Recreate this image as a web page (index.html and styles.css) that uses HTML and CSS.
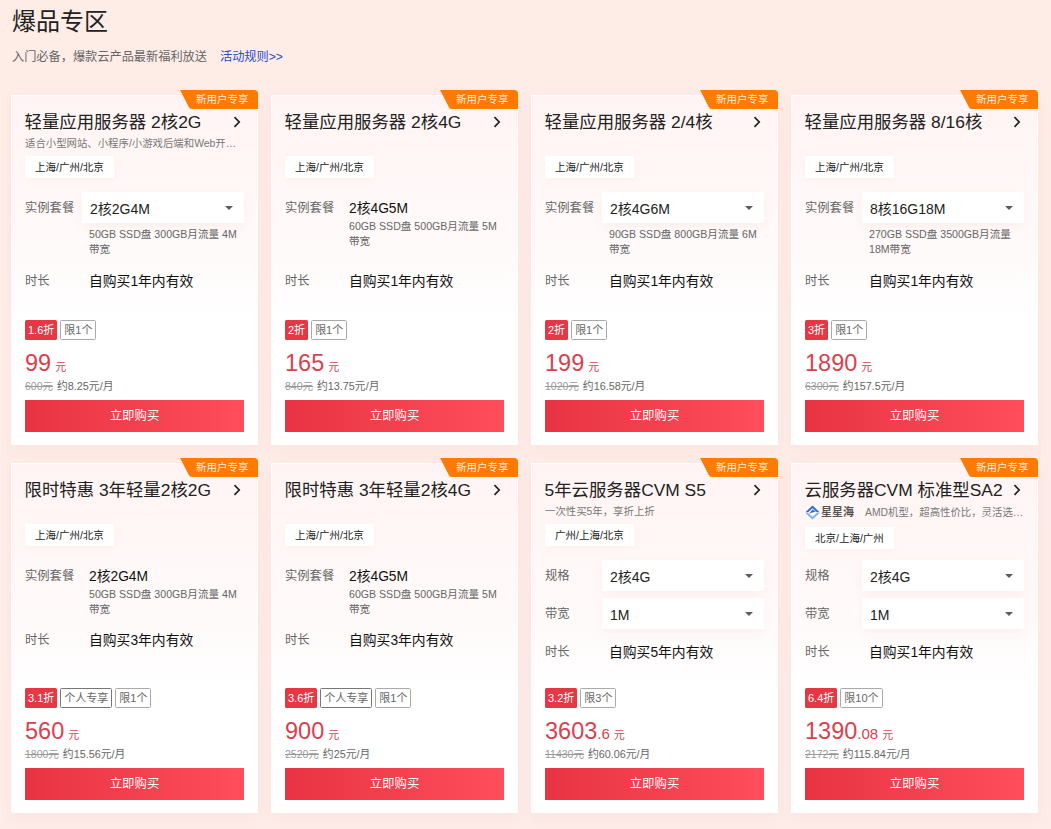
FILE: index.html
```html
<!DOCTYPE html>
<html lang="zh-CN">
<head>
<meta charset="utf-8">
<title>爆品专区</title>
<link rel="stylesheet" href="styles.css">
</head>
<body>
<main class="page">
  <h1 class="page-title">爆品专区</h1>
  <p class="page-sub"><span>入门必备，爆款云产品最新福利放送</span><a class="rule-link" href="#">活动规则&gt;&gt;</a></p>
  <div class="grid">

    <article class="card">
      <span class="badge">新用户专享</span>
      <header class="head">
        <div class="title-row"><h2 class="title">轻量应用服务器 2核2G</h2><svg class="chev" viewBox="0 0 8 12"><path d="M1.5 1.2 6.2 6 1.5 10.8"/></svg></div>
        <p class="sub">适合小型网站、小程序/小游戏后端和Web开…</p>
        <span class="region">上海/广州/北京</span>
      </header>
      <div class="row row-desc"><span class="label">实例套餐</span><div class="field"><div class="select">2核2G4M<i class="caret"></i></div><p class="desc">50GB SSD盘 300GB月流量 4M带宽</p></div></div>
      <div class="row"><span class="label">时长</span><span class="value">自购买1年内有效</span></div>
      <footer class="foot">
        <div class="tags"><span class="off">1.6折</span><span class="lim">限1个</span></div>
        <div class="price"><b class="num">99</b><span class="unit">元</span></div>
        <div class="old"><s>600元</s><span>约8.25元/月</span></div>
        <a class="buy" href="#">立即购买</a>
      </footer>
    </article>

    <article class="card">
      <span class="badge">新用户专享</span>
      <header class="head">
        <div class="title-row"><h2 class="title">轻量应用服务器 2核4G</h2><svg class="chev" viewBox="0 0 8 12"><path d="M1.5 1.2 6.2 6 1.5 10.8"/></svg></div>
        <p class="sub"></p>
        <span class="region">上海/广州/北京</span>
      </header>
      <div class="row row-tall"><span class="label">实例套餐</span><div class="field"><span class="value">2核4G5M</span><p class="desc">60GB SSD盘 500GB月流量 5M带宽</p></div></div>
      <div class="row"><span class="label">时长</span><span class="value">自购买1年内有效</span></div>
      <footer class="foot">
        <div class="tags"><span class="off">2折</span><span class="lim">限1个</span></div>
        <div class="price"><b class="num">165</b><span class="unit">元</span></div>
        <div class="old"><s>840元</s><span>约13.75元/月</span></div>
        <a class="buy" href="#">立即购买</a>
      </footer>
    </article>

    <article class="card">
      <span class="badge">新用户专享</span>
      <header class="head">
        <div class="title-row"><h2 class="title">轻量应用服务器 2/4核</h2><svg class="chev" viewBox="0 0 8 12"><path d="M1.5 1.2 6.2 6 1.5 10.8"/></svg></div>
        <p class="sub"></p>
        <span class="region">上海/广州/北京</span>
      </header>
      <div class="row row-desc"><span class="label">实例套餐</span><div class="field"><div class="select">2核4G6M<i class="caret"></i></div><p class="desc">90GB SSD盘 800GB月流量 6M带宽</p></div></div>
      <div class="row"><span class="label">时长</span><span class="value">自购买1年内有效</span></div>
      <footer class="foot">
        <div class="tags"><span class="off">2折</span><span class="lim">限1个</span></div>
        <div class="price"><b class="num">199</b><span class="unit">元</span></div>
        <div class="old"><s>1020元</s><span>约16.58元/月</span></div>
        <a class="buy" href="#">立即购买</a>
      </footer>
    </article>

    <article class="card">
      <span class="badge">新用户专享</span>
      <header class="head">
        <div class="title-row"><h2 class="title">轻量应用服务器 8/16核</h2><svg class="chev" viewBox="0 0 8 12"><path d="M1.5 1.2 6.2 6 1.5 10.8"/></svg></div>
        <p class="sub"></p>
        <span class="region">上海/广州/北京</span>
      </header>
      <div class="row row-desc"><span class="label">实例套餐</span><div class="field"><div class="select">8核16G18M<i class="caret"></i></div><p class="desc">270GB SSD盘 3500GB月流量 18M带宽</p></div></div>
      <div class="row"><span class="label">时长</span><span class="value">自购买1年内有效</span></div>
      <footer class="foot">
        <div class="tags"><span class="off">3折</span><span class="lim">限1个</span></div>
        <div class="price"><b class="num">1890</b><span class="unit">元</span></div>
        <div class="old"><s>6300元</s><span>约157.5元/月</span></div>
        <a class="buy" href="#">立即购买</a>
      </footer>
    </article>

    <article class="card">
      <span class="badge">新用户专享</span>
      <header class="head">
        <div class="title-row"><h2 class="title">限时特惠 3年轻量2核2G</h2><svg class="chev" viewBox="0 0 8 12"><path d="M1.5 1.2 6.2 6 1.5 10.8"/></svg></div>
        <p class="sub"></p>
        <span class="region">上海/广州/北京</span>
      </header>
      <div class="row row-short"><span class="label">实例套餐</span><div class="field"><span class="value">2核2G4M</span><p class="desc">50GB SSD盘 300GB月流量 4M带宽</p></div></div>
      <div class="row"><span class="label">时长</span><span class="value">自购买3年内有效</span></div>
      <footer class="foot">
        <div class="tags"><span class="off">3.1折</span><span class="lim lim-dark">个人专享</span><span class="lim">限1个</span></div>
        <div class="price"><b class="num">560</b><span class="unit">元</span></div>
        <div class="old"><s>1800元</s><span>约15.56元/月</span></div>
        <a class="buy" href="#">立即购买</a>
      </footer>
    </article>

    <article class="card">
      <span class="badge">新用户专享</span>
      <header class="head">
        <div class="title-row"><h2 class="title">限时特惠 3年轻量2核4G</h2><svg class="chev" viewBox="0 0 8 12"><path d="M1.5 1.2 6.2 6 1.5 10.8"/></svg></div>
        <p class="sub"></p>
        <span class="region">上海/广州/北京</span>
      </header>
      <div class="row row-short"><span class="label">实例套餐</span><div class="field"><span class="value">2核4G5M</span><p class="desc">60GB SSD盘 500GB月流量 5M带宽</p></div></div>
      <div class="row"><span class="label">时长</span><span class="value">自购买3年内有效</span></div>
      <footer class="foot">
        <div class="tags"><span class="off">3.6折</span><span class="lim lim-dark">个人专享</span><span class="lim">限1个</span></div>
        <div class="price"><b class="num">900</b><span class="unit">元</span></div>
        <div class="old"><s>2520元</s><span>约25元/月</span></div>
        <a class="buy" href="#">立即购买</a>
      </footer>
    </article>

    <article class="card">
      <span class="badge">新用户专享</span>
      <header class="head">
        <div class="title-row"><h2 class="title">5年云服务器CVM S5</h2><svg class="chev" viewBox="0 0 8 12"><path d="M1.5 1.2 6.2 6 1.5 10.8"/></svg></div>
        <p class="sub">一次性买5年，享折上折</p>
        <span class="region">广州/上海/北京</span>
      </header>
      <div class="row row-select"><span class="label">规格</span><div class="field"><div class="select">2核4G<i class="caret"></i></div></div></div>
      <div class="row row-select"><span class="label">带宽</span><div class="field"><div class="select">1M<i class="caret"></i></div></div></div>
      <div class="row"><span class="label">时长</span><span class="value">自购买5年内有效</span></div>
      <footer class="foot">
        <div class="tags"><span class="off">3.2折</span><span class="lim">限3个</span></div>
        <div class="price"><b class="num">3603</b><span class="cents">.6</span><span class="unit">元</span></div>
        <div class="old"><s>11430元</s><span>约60.06元/月</span></div>
        <a class="buy" href="#">立即购买</a>
      </footer>
    </article>

    <article class="card">
      <span class="badge">新用户专享</span>
      <header class="head">
        <div class="title-row"><h2 class="title">云服务器CVM 标准型SA2</h2><svg class="chev" viewBox="0 0 8 12"><path d="M1.5 1.2 6.2 6 1.5 10.8"/></svg></div>
        <div class="sub sub-logo">
          <svg class="logo" viewBox="0 0 15 15"><path class="logo-a" d="M0.4 7.2 7.5 0.4 14.6 7.2 11.8 7.2 7.5 3.2 3.2 7.2Z"/><path class="logo-b" d="M4.2 8.6 10.8 6.6 7.5 4.6Z"/><path class="logo-c" d="M0.4 8 3.2 8 7.5 11.8 11.8 8 14.6 8 7.5 14.6Z"/></svg>
          <b class="logo-name">星星海</b>
          <span class="sub-text">AMD机型，超高性价比，灵活选…</span>
        </div>
        <span class="region">北京/上海/广州</span>
      </header>
      <div class="row row-select"><span class="label">规格</span><div class="field"><div class="select">2核4G<i class="caret"></i></div></div></div>
      <div class="row row-select"><span class="label">带宽</span><div class="field"><div class="select">1M<i class="caret"></i></div></div></div>
      <div class="row"><span class="label">时长</span><span class="value">自购买1年内有效</span></div>
      <footer class="foot">
        <div class="tags"><span class="off">6.4折</span><span class="lim">限10个</span></div>
        <div class="price"><b class="num">1390</b><span class="cents">.08</span><span class="unit">元</span></div>
        <div class="old"><s>2172元</s><span>约115.84元/月</span></div>
        <a class="buy" href="#">立即购买</a>
      </footer>
    </article>

  </div>
</main>
</body>
</html>
```

FILE: styles.css
```css
* { box-sizing: border-box; }
html, body { margin: 0; height: 100%; }
body {
  font-family: "Liberation Sans", "Noto Sans CJK SC", sans-serif;
  background: linear-gradient(180deg, #feece7 0%, #fdece8 100%);
  color: #222;
  overflow: hidden;
}
.page { padding: 8px 13px 0 11px; }
.page-title { margin: 0 0 0 1px; font-size: 24px; line-height: 28px; font-weight: 400; color: #222; }
.page-sub { margin: 13px 0 0 1px; height: 16px; font-size: 12.2px; line-height: 16px; color: #666; display: flex; gap: 13px; }
.rule-link { color: #2a4bc8; text-decoration: none; }
.grid { margin-top: 30px; display: grid; grid-template-columns: repeat(4, 247px); column-gap: 13px; row-gap: 18px; }

.card {
  position: relative;
  height: 350px;
  padding: 15px 14px 13px;
  display: flex;
  flex-direction: column;
  background: linear-gradient(180deg, #fff4f3 0%, #fffafa 45%, #fff 65%);
  box-shadow: inset 0 0 0 1px #fff, 0 4px 14px rgba(230, 150, 140, .08);
}
.badge {
  position: absolute;
  top: -5px;
  right: 0;
  width: 78px;
  height: 19px;
  padding-left: 16px;
  font-size: 10.5px;
  line-height: 19px;
  color: #ffeee0;
  background: #ff7a00;
  clip-path: path("M0 0H74Q78 0 78 4V19H12Q9.5 19 8.5 16.5Z");
}
.head { height: 82px; flex: none; }
.title-row { display: flex; align-items: center; justify-content: space-between; height: 24px; }
.title { margin: 0 0 0 -0.5px; font-size: 17.4px; line-height: 24px; font-weight: 400; color: #222; white-space: nowrap; }
.chev { width: 8px; height: 12px; margin-right: 3px; flex: none; }
.chev path { fill: none; stroke: #222; stroke-width: 1.7; }
.sub {
  margin: 1.5px 0 5.5px;
  height: 15px;
  font-size: 10.4px;
  line-height: 15px;
  color: #777;
  white-space: nowrap;
}
.sub-logo { display: flex; align-items: center; height: 18px; margin-bottom: 5px; }
.logo { width: 15px; height: 15px; flex: none; }
.logo-a { fill: #2f6fdc; }
.logo-b { fill: #2f6fdc; }
.logo-c { fill: #7db4f2; }
.logo-name { margin: 0 11px 0 1px; font-size: 11px; color: #555; flex: none; }
.region {
  display: inline-block;
  height: 22px;
  padding: 0 10px;
  font-size: 10.5px;
  line-height: 22px;
  color: #222;
  background: #fff;
  box-shadow: 0 2px 6px rgba(230, 160, 150, .08);
}

.row { display: flex; margin-bottom: 8px; flex: none; }
.row-tall { min-height: 64.5px; }
.row-short { margin-bottom: 7px; }
.row-select { margin-bottom: 7px; }
.row-desc { margin-bottom: 7.5px; }
.label { width: 57px; flex: none; padding-top: 9px; font-size: 12.3px; line-height: 15px; color: #666; }
.field { flex: 1; min-width: 0; }
.value { display: block; padding: 9px 0 0 7px; font-size: 13.8px; line-height: 15px; color: #111; }
.select {
  position: relative;
  height: 31px;
  padding-left: 8px;
  font-size: 14px;
  line-height: 34px;
  color: #222;
  background: #fff;
  box-shadow: 0 4px 10px rgba(230, 160, 150, .1);
}
.caret {
  position: absolute;
  right: 11px;
  top: 14px;
  border-style: solid;
  border-width: 4px 4px 0;
  border-color: #5c5c5c transparent transparent;
}
.desc { margin: 3px 0 0; padding-left: 7px; font-size: 10.6px; line-height: 15px; color: #666; }
.select + .desc { margin-top: 4px; }

.foot { margin-top: auto; }
.tags { display: flex; gap: 3px; height: 20px; }
.off, .lim { height: 20px; font-size: 11px; line-height: 18px; padding: 0 3px; border-radius: 1.5px; white-space: nowrap; }
.off { color: #fff; background: #e63745; line-height: 20px; }
.lim { color: #666; border: 1px solid #aaa; }
.lim-dark { border-color: #777; }
.price { margin-top: 10px; height: 27px; line-height: 27px; color: #d9414f; white-space: nowrap; }
.num { font-size: 23.5px; font-weight: 400; }
.cents { font-size: 15px; }
.unit { margin-left: 4px; font-size: 11px; }
.old { margin-top: 2px; height: 14px; font-size: 10.8px; line-height: 14px; color: #666; display: flex; gap: 4px; }
.old s { color: #999; font-size: 10.5px; }
.buy {
  display: block;
  margin-top: 7px;
  height: 32px;
  text-align: center;
  font-size: 12.4px;
  line-height: 32px;
  color: #fff;
  text-decoration: none;
  background: linear-gradient(90deg, #e83442 0%, #ff4d5c 100%);
}
```
